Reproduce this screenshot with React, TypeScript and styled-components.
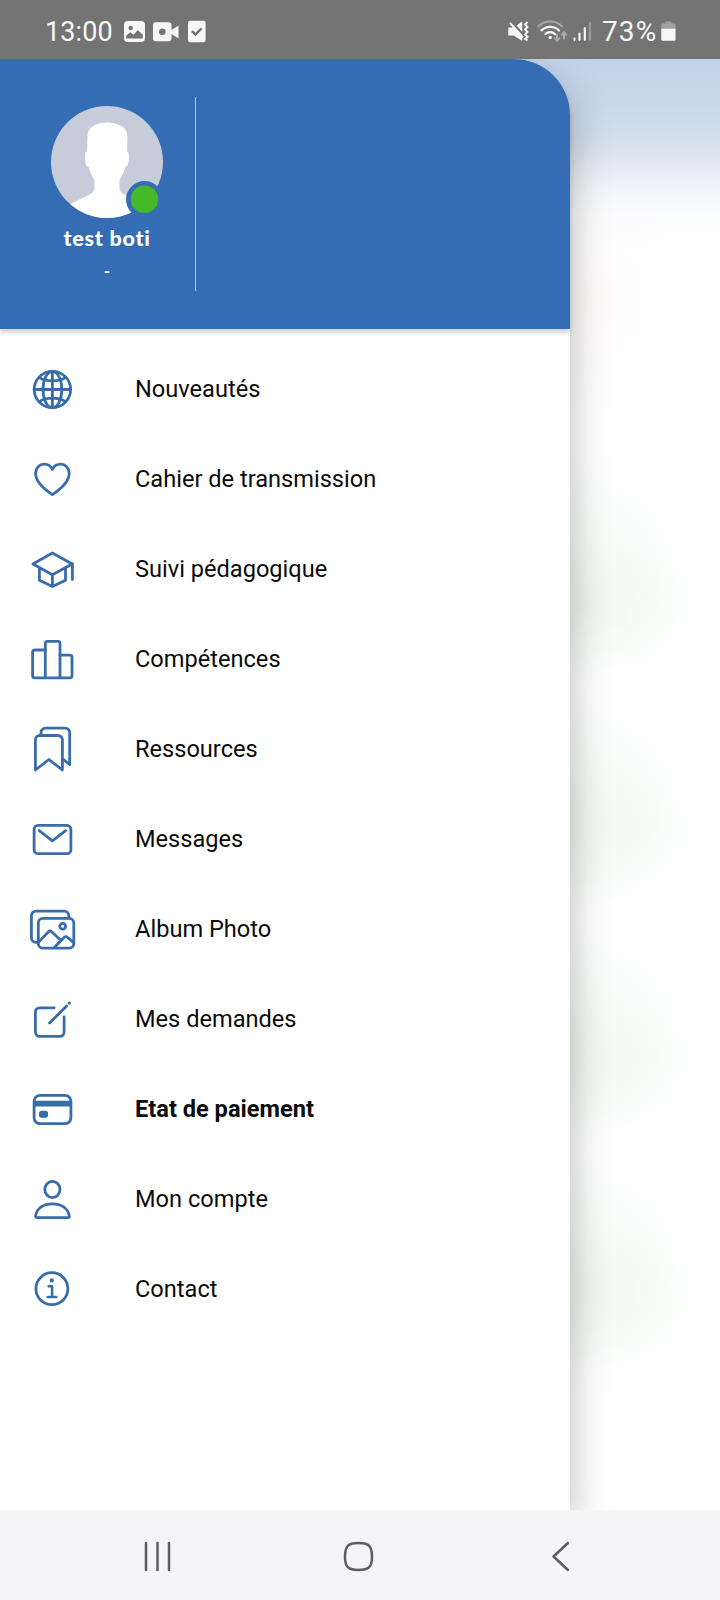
import React from "react";
import styled, { createGlobalStyle } from "styled-components";

const GlobalStyle = createGlobalStyle`
  * { box-sizing: border-box; }
  body { margin: 0; background: #fff; font-family: Roboto, "Liberation Sans", sans-serif; }
`;

const Screen = styled.div`
  width: 720px;
  height: 1600px;
  display: flex;
  flex-direction: column;
  overflow: hidden;
`;

const StatusBar = styled.header`
  height: 59px;
  flex: none;
  display: flex;
  align-items: center;
  justify-content: space-between;
  padding: 4px 44px 0 45px;
  background: #747474;
  color: #f7f7f7;
  position: relative;
  z-index: 1;
`;

const StatusGroup = styled.div`
  display: flex;
  align-items: center;
`;

const Clock = styled.span`
  width: 68px;
  font-size: 27px;
  line-height: 32px;
  letter-spacing: 0.1px;
  white-space: nowrap;
`;

const BatteryLevel = styled.span`
  width: 57px;
  margin-left: 10px;
  font-size: 28px;
  line-height: 32px;
  letter-spacing: 1.1px;
  white-space: nowrap;
`;

const StatusIcon = styled.svg<{ $gap: number }>`
  display: block;
  flex: none;
  height: 24px;
  margin-left: ${(p) => p.$gap}px;
`;

const Main = styled.main`
  flex: 1;
  display: flex;
  min-height: 0;
  overflow: hidden;
  background:
    radial-gradient(ellipse 110px 70px at 585px 546px, rgba(190, 230, 198, 0.18), rgba(190, 230, 198, 0.08) 50%, transparent),
    radial-gradient(ellipse 125px 120px at 575px 515px, rgba(190, 230, 198, 0.16), rgba(190, 230, 198, 0.09) 50%, transparent),
    radial-gradient(ellipse 110px 70px at 585px 774px, rgba(190, 230, 198, 0.11), rgba(190, 230, 198, 0.06) 50%, transparent),
    radial-gradient(ellipse 125px 120px at 575px 747px, rgba(190, 230, 198, 0.17), rgba(190, 230, 198, 0.09) 50%, transparent),
    radial-gradient(ellipse 110px 70px at 585px 1006px, rgba(190, 230, 198, 0.12), rgba(190, 230, 198, 0.06) 50%, transparent),
    radial-gradient(ellipse 125px 120px at 575px 980px, rgba(190, 230, 198, 0.17), rgba(190, 230, 198, 0.09) 50%, transparent),
    radial-gradient(ellipse 110px 75px at 585px 1238px, rgba(190, 230, 198, 0.17), rgba(190, 230, 198, 0.08) 50%, transparent),
    radial-gradient(ellipse 125px 125px at 575px 1210px, rgba(190, 230, 198, 0.16), rgba(190, 230, 198, 0.09) 50%, transparent),
    radial-gradient(ellipse 110px 110px at 585px 240px, rgba(250, 235, 236, 0.22), transparent),
    linear-gradient(#c3d4ea 0, #c8d7ea 45px, #d0ddec 75px, #e2e9f3 105px, #f2f5f9 130px, #fbfcfe 155px, #fff 190px);
`;

const Drawer = styled.aside`
  width: 570px;
  flex: none;
  display: flex;
  flex-direction: column;
  background: #fff;
  border-top-right-radius: 56px;
  box-shadow: 2px 14px 38px rgba(0, 0, 0, 0.26);
`;

const Profile = styled.section`
  height: 270px;
  flex: none;
  display: flex;
  align-items: flex-start;
  padding: 38px 0 0 19px;
  background: #346db4;
  border-top-right-radius: 56px;
  box-shadow: 0 4px 4px rgba(30, 40, 70, 0.2);
`;

const Identity = styled.div`
  width: 177px;
  height: 194px;
  display: flex;
  flex-direction: column;
  align-items: center;
  padding-top: 9px;
  border-right: 1.5px solid #b5cdec;
  color: #fff;
`;

const AvatarArt = styled.svg`
  display: block;
  width: 112px;
  height: 112px;
`;

const UserName = styled.div`
  margin-top: 6px;
  font-family: Lato, "Open Sans", sans-serif;
  font-weight: 900;
  font-size: 21.5px;
  line-height: 28px;
  letter-spacing: 0.75px;
  white-space: nowrap;
`;

const UserDetail = styled.div`
  margin-top: 7px;
  font-size: 18px;
  font-weight: 500;
  line-height: 26px;
`;

const Menu = styled.nav`
  display: flex;
  flex-direction: column;
  padding-top: 15px;
`;

const MenuItem = styled.a<{ $active?: boolean }>`
  height: 90px;
  display: flex;
  align-items: center;
  gap: 59px;
  padding-left: 28px;
  color: #0b0b0b;
  font-size: 23.6px;
  line-height: 30px;
  font-weight: ${(p) => (p.$active ? 700 : 400)};
  white-space: nowrap;
`;

const MenuIcon = styled.svg`
  display: block;
  flex: none;
  width: 48px;
  height: 48px;
  fill: none;
  stroke: #386cab;
  stroke-width: 2.8;
  stroke-linecap: round;
  stroke-linejoin: round;

  .solid { fill: #386cab; stroke: none; }
`;

const NavBar = styled.footer`
  height: 90px;
  flex: none;
  display: flex;
  align-items: center;
  padding: 2px 145px 0 141px;
  justify-content: space-between;
  background: #f5f5f8;
  position: relative;
  z-index: 1;
`;

const NavIcon = styled.svg`
  display: block;
  width: 34px;
  height: 34px;
  fill: none;
  stroke: #5d5d5f;
  stroke-width: 2.5;
  stroke-linecap: round;
  stroke-linejoin: round;
`;

const menu: { label: string; active?: boolean; icon: React.ReactNode }[] = [
  {
    label: "Nouveautés",
    icon: (
      <>
        <circle cx="24.4" cy="24.5" r="18.2" />
        <ellipse cx="24.4" cy="24.5" rx="9.4" ry="18.2" />
        <path d="M24.4 6.2v36.6M6.1 24.5h36.6M11.2 12.3C17.5 17 31.3 17 37.6 12.3M11.2 36.7C17.5 32 31.3 32 37.6 36.7" />
      </>
    ),
  },
  {
    label: "Cahier de transmission",
    icon: (
      <path d="M24.4 39.6C20 36.7 7.6 28.5 7.6 18.3 7.6 13 11.4 9.1 16.2 9.1c3.4 0 6.6 1.9 8.2 5.3 1.600-3.400 4.800-5.300 8.200-5.300 4.800 0 8.600 3.900 8.600 9.200 0 10.200-12.400 18.400-16.800 21.300Z" />
    ),
  },
  {
    label: "Suivi pédagogique",
    icon: (
      <>
        <path d="M4.9 19 24.4 8 44.2 19 24.4 29.7Z" />
        <path d="M11.4 23v12.2l13 6.4 13.1-6.4V23M24.4 29.7v11.6M44.4 19v15.5" />
      </>
    ),
  },
  {
    label: "Compétences",
    icon: (
      <>
        <path d="M17.3 15H6.6a2 2 0 0 0-2 2v23.8a2 2 0 0 0 2 2h35.4a2 2 0 0 0 2-2V22.2a2 2 0 0 0-2-2H32" />
        <path d="M17.3 42.8V8.3a2 2 0 0 1 2-2H30a2 2 0 0 1 2 2v34.5" />
      </>
    ),
  },
  {
    label: "Ressources",
    icon: (
      <>
        <path d="M7.4 45V14.9a4.4 4.4 0 0 1 4.4-4.4h18.2a4.4 4.4 0 0 1 4.4 4.4V45L20.9 34.5Z" />
        <path d="M13 10V7.5a4.4 4.4 0 0 1 4.4-4.4h19.9a4.4 4.4 0 0 1 4.4 4.4v32.3l-5.8-5" />
      </>
    ),
  },
  {
    label: "Messages",
    icon: (
      <>
        <rect x="6.1" y="10.3" width="36.8" height="28.4" rx="4" />
        <path d="m11.2 15.6 13.2 10.3 13.2-10.3" />
      </>
    ),
  },
  {
    label: "Album Photo",
    icon: (
      <>
        <path d="M9.8 37.3H8a4.6 4.6 0 0 1-4.6-4.6V10.8A4.6 4.6 0 0 1 8 6.2h28.2a4.6 4.6 0 0 1 4.6 4.6v2" />
        <rect x="10.3" y="13.3" width="35.5" height="29.8" rx="4.6" />
        <circle cx="34.7" cy="21.3" r="2.9" />
        <path d="m11 36.6 9.5-9.8q1.6-1.6 3.2 0l8.2 7.7M26.3 42.6l10-10.3q1.6-1.4 3.2 0l6 5" />
      </>
    ),
  },
  {
    label: "Mes demandes",
    icon: (
      <>
        <path d="M26.2 12.8H11.700a4.300 4.300 0 0 0-4.300 4.300v20A4.300 4.300 0 0 0 11.700 41.400h20.100a4.300 4.300 0 0 0 4.300-4.300V21.900M21.600 27.900 38.600 11" />
        <circle className="solid" cx="41.3" cy="8.1" r="1.7" />
      </>
    ),
  },
  {
    label: "Etat de paiement",
    active: true,
    icon: (
      <>
        <rect x="6.1" y="10.3" width="36.8" height="28.4" rx="6" />
        <path className="solid" d="M6 15.8h37v5.7H6z" />
        <rect className="solid" x="10.9" y="25.7" width="9.2" height="7" rx="3" />
      </>
    ),
  },
  {
    label: "Mon compte",
    icon: (
      <>
        <ellipse cx="24.4" cy="14.5" rx="7.6" ry="8.2" />
        <path d="M9 42.6h30.8c1.2 0 1.8-.8 1.5-2C39.8 33.2 33.2 28.8 24.4 28.8S9 33.2 7.6 40.6c-.3 1.2.3 2 1.4 2Z" />
      </>
    ),
  },
  {
    label: "Contact",
    icon: (
      <>
        <circle cx="23.9" cy="23.7" r="16" />
        <circle className="solid" cx="23.8" cy="15.4" r="2.1" />
        <path strokeWidth="2.5" d="M20.6 21.2h3.5V32M19.7 32h8.6" />
      </>
    ),
  },
];

function Avatar() {
  return (
    <AvatarArt viewBox="0 0 112 112" overflow="visible">
      <defs>
        <clipPath id="avatar-disc">
          <circle cx="56" cy="56" r="56" />
        </clipPath>
      </defs>
      <g clipPath="url(#avatar-disc)">
        <path fill="#c6ccda" d="M0 0h112v112H0z" />
        <path
          fill="#fff"
          d="M56 16.5c-9 0-19.5 3.5-19.5 14.5L36 45.5l-1.6.7c-.8 5.8-.2 11 1.4 14l1.9.8c1.6 6.4 3.6 9.6 5.800 13v8.200c0 3-1.800 4.600-5 6.400L19.500 98 10 112h92l-9.500-14-19-9.400c-3.200-1.800-5-3.400-5-6.400V74c2.200-3.400 4.200-6.600 5.800-13l1.900-.8c1.600-3 2.200-8.200 1.400-14l-1.600-.7L76.500 31C76.500 20 65 16.500 56 16.500Z"
        />
      </g>
      <circle cx="93.5" cy="93.5" r="18.5" fill="#346db4" />
      <circle cx="93.5" cy="93.3" r="13.7" fill="#46b92a" />
    </AvatarArt>
  );
}

export default function App() {
  return (
    <>
      <GlobalStyle />
      <Screen>
        <StatusBar>
          <StatusGroup>
            <Clock>13:00</Clock>
            <StatusIcon $gap={11} width="21" viewBox="0 0 21 24" fill="currentColor">
              <rect y="1" width="21" height="21" rx="4" />
              <circle cx="6.7" cy="8" r="2.2" fill="#747474" />
              <path fill="#747474" d="M2.2 18.5v-2.8l4-3.5 3.3 2.6 4.3-4.7 5 4.6v3.8Z" />
            </StatusIcon>
            <StatusIcon $gap={8} width="26" viewBox="0 0 26 24" fill="currentColor">
              <rect y="2.3" width="18.5" height="19" rx="3" />
              <path d="m17.5 10.5 8-5v13l-8-5Z" />
              <circle cx="9.3" cy="11.8" r="3.3" fill="#747474" />
            </StatusIcon>
            <StatusIcon $gap={9} width="18" viewBox="0 0 18 24" fill="currentColor">
              <rect y=".7" width="17.6" height="21.6" rx="2.2" />
              <path d="m4 11.2 3.4 3.4 6.3-6.3" fill="none" stroke="#747474" strokeWidth="2.4" />
            </StatusIcon>
          </StatusGroup>
          <StatusGroup>
            <StatusIcon $gap={0} width="21" viewBox="0 0 21 24" fill="currentColor">
              <path d="M.3 7.5h5.5L14.2 1.500V21l-8.400-5.600H.3Z" />
              <path d="m3.500 1.500 12 13.600" stroke="#747474" strokeWidth="2.2" />
              <path d="m2 2.800 13 14.800" stroke="currentColor" strokeWidth="2" />
              <path d="m19.500 2-2.400 2.400 2.400 2.500-2.400 2.500 2.400 2.500-2.400 2.500 2.400 2.500-2.400 2 2.400 1.500" fill="none" stroke="currentColor" strokeWidth="2" />
            </StatusIcon>
            <StatusIcon $gap={8} width="31" viewBox="0 0 31 24" fill="none" strokeWidth="2.2" strokeLinecap="round">
              <path d="M1.500 6.200C8-.1 18.500-.1 25 6.200" stroke="#a6a6a6" />
              <path d="M4.500 10.400c4.800-4.800 12.800-4.800 17.500 0M8.300 14.200c2.800-2.700 7-2.700 9.800 0" stroke="currentColor" />
              <circle cx="13.2" cy="17.5" r="1.7" fill="currentColor" />
              <path d="M20 14.500v6M17.700 18.300l2.300 2.500 2.300-2.500M27 18.500v-6M24.700 14.700l2.300-2.500 2.300 2.500" stroke="#a9a9a9" strokeWidth="2" />
            </StatusIcon>
            <StatusIcon $gap={5} width="19" viewBox="0 0 19 24" fill="none" strokeWidth="2.2" strokeLinecap="round">
              <path d="M1.500 18.500v1.300M6.500 13.500v6.300M11.800 8v11.800" stroke="currentColor" />
              <path d="M17 2.500v17.300" stroke="#9c9c9c" />
            </StatusIcon>
            <BatteryLevel>73%</BatteryLevel>
            <StatusIcon $gap={2} width="15" viewBox="0 0 15 24">
              <path fill="#a1a1a1" d="M4.3 1.500h6v2H13q1.500 0 1.500 1.500v5H.3V5q0-1.500 1.500-1.500h2.500Z" />
              <path fill="currentColor" d="M.3 8.700h14.200v10.500q0 1.500-1.500 1.500H1.800q-1.500 0-1.500-1.500Z" />
            </StatusIcon>
          </StatusGroup>
        </StatusBar>
        <Main>
          <Drawer>
            <Profile>
              <Identity>
                <Avatar />
                <UserName>test boti</UserName>
                <UserDetail>-</UserDetail>
              </Identity>
            </Profile>
            <Menu>
              {menu.map((item) => (
                <MenuItem key={item.label} $active={item.active}>
                  <MenuIcon viewBox="0 0 48 48">{item.icon}</MenuIcon>
                  {item.label}
                </MenuItem>
              ))}
            </Menu>
          </Drawer>
        </Main>
        <NavBar>
          <NavIcon viewBox="0 0 34 34">
            <path d="M5 4v27M16.500 4v27M28 4v27" />
          </NavIcon>
          <NavIcon viewBox="0 0 34 34">
            <path d="M17.500 4C28 4 31 7 31 17.500S28 31 17.500 31 4 28 4 17.500 7 4 17.500 4Z" />
          </NavIcon>
          <NavIcon viewBox="0 0 34 34">
            <path d="M27 4 12.500 17.500 27 31" />
          </NavIcon>
        </NavBar>
      </Screen>
    </>
  );
}
